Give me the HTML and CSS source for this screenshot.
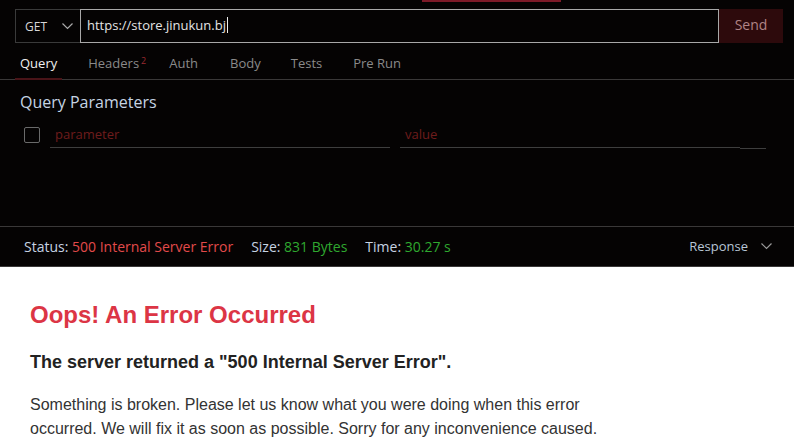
FILE: index.html
```html
<!DOCTYPE html>
<html>
<head>
<meta charset="utf-8">
<link rel="stylesheet" href="styles.css">
</head>
<body>
<div class="app">
  <div class="topline"><span class="redmark"></span></div>
  <div class="urlbar">
    <div class="method">
      <span>GET</span>
      <svg class="chev" width="11" height="7" viewBox="0 0 11 7"><path d="M0.5 0.5 L5.5 5.5 L10.5 0.5" fill="none" stroke="#aaa" stroke-width="1.2"/></svg>
    </div>
    <div class="url"><span class="urltext">https://store.jinukun.bj</span><span class="caret"></span></div>
    <div class="send">Send</div>
  </div>
  <div class="tabs">
    <div class="tab active">Query</div>
    <div class="tab">Headers<sup class="badge">2</sup></div>
    <div class="tab">Auth</div>
    <div class="tab">Body</div>
    <div class="tab">Tests</div>
    <div class="tab">Pre Run</div>
  </div>
  <div class="params">
    <div class="ptitle">Query Parameters</div>
    <div class="prow">
      <div class="check"></div>
      <div class="field fparam">parameter</div>
      <div class="field fvalue">value</div>
      <div class="ftail"></div>
    </div>
  </div>
  <div class="status">
    <div class="stat">Status: <span class="err">500 Internal Server Error</span></div>
    <div class="stat">Size: <span class="ok">831 Bytes</span></div>
    <div class="stat">Time: <span class="ok">30.27 s</span></div>
    <div class="spacer"></div>
    <div class="resp">Response
      <svg class="chev2" width="11" height="7" viewBox="0 0 11 7"><path d="M0.5 0.5 L5.5 5.5 L10.5 0.5" fill="none" stroke="#999" stroke-width="1.2"/></svg>
    </div>
  </div>
  <div class="preview">
    <h1>Oops! An Error Occurred</h1>
    <h2>The server returned a "500 Internal Server Error".</h2>
    <p>Something is broken. Please let us know what you were doing when this error occurred. We will fix it as soon as possible. Sorry for any inconvenience caused.</p>
  </div>
</div>
</body>
</html>
```

FILE: styles.css
```css
* { box-sizing: border-box; }
html, body { margin: 0; padding: 0; }
body {
  width: 794px;
  height: 441px;
  overflow: hidden;
  background: #050303;
  font-family: "Open Sans", "Noto Sans", sans-serif;
}
.app { display: flex; flex-direction: column; height: 441px; }
.topline { height: 9px; position: relative; }
.redmark {
  position: absolute; left: 422px; top: 0; width: 139px; height: 2px;
  background: #7d1a28;
}
.urlbar {
  display: flex;
  height: 34px;
  margin: 0 11px 0 15px;
}
.method {
  width: 65px;
  border: 1px solid #3a3a3a;
  border-right: none;
  display: flex; align-items: center;
  padding-left: 9px;
  color: #d8d8d8;
  font-size: 12px;
}
.method span { flex: 1; }
.method .chev { margin-right: 7px; }
.url {
  flex: 1;
  border: 1px solid #a8a8a8;
  display: flex; align-items: center;
  padding-left: 6px;
  padding-bottom: 2px;
  color: #e4e4e4;
  font-size: 13px;
}
.caret { width: 1px; height: 16px; background: #eee; margin-left: 1px; }
.send {
  width: 64px;
  background: #2d0a0c;
  color: #b08486;
  font-size: 14px;
  padding-bottom: 3px;
  display: flex; align-items: center; justify-content: center;
}
.tabs {
  display: flex;
  height: 37px;
  border-bottom: 1px solid #3a3838;
  padding-left: 15px;
}
.tab {
  color: #8a8a8a;
  font-size: 13px;
  display: flex; align-items: center;
  padding: 4px 5px 0 5px;
  position: relative;
}
.tab:nth-child(1) { margin-right: 21px; }
.tab:nth-child(2) { margin-right: 13px; }
.tab:nth-child(3) { margin-right: 22px; }
.tab:nth-child(4) { margin-right: 20px; }
.tab:nth-child(5) { margin-right: 21px; }
.tab.active { color: #f0f0f0; }
.tab.active::after {
  content: ""; position: absolute; left: 0; right: 0; bottom: -1px; height: 2px;
  background: #4a1418;
}
.badge { color: #9a2a30; font-size: 9px; margin-left: 2px; position: relative; top: -3px; }
.params { height: 147px; border-bottom: 1px solid #3a3838; padding: 12px 0 0 20px; }
.ptitle { color: #c6d4e4; font-size: 16px; line-height: 20px; }
.prow { display: flex; align-items: flex-end; margin-top: 10px; }
.check {
  width: 16px; height: 16px; border: 1px solid #6a6a6a; border-radius: 2px;
  margin-left: 4px; margin-right: 10px; margin-bottom: 5px;
}
.field {
  width: 340px; height: 26px;
  border-bottom: 1px solid #3e3e3e;
  color: #6e1c1c;
  font-size: 13px;
  padding-left: 5px;
  padding-bottom: 2px;
  display: flex; align-items: center;
}
.fvalue { margin-left: 10px; }
.ftail { width: 26px; border-bottom: 1px solid #3e3e3e; margin-bottom: -1px; }
.status {
  height: 40px;
  border-bottom: 1px solid #3a3838;
  display: flex; align-items: center;
  padding-left: 24px;
  padding-bottom: 1px;
  font-size: 14px;
  color: #c6d2e2;
}
.stat { margin-right: 18px; white-space: nowrap; }
.err { color: #e24a4a; }
.ok { color: #2fa82f; }
.spacer { flex: 1; }
.resp { color: #b8c6d6; font-size: 13px; margin-right: 22px; display: flex; align-items: center; }
.chev2 { margin-left: 13px; }
.preview {
  flex: 1;
  background: #ffffff;
  padding: 0 30px;
  font-family: "Liberation Sans", Arial, sans-serif;
}
.preview h1 {
  margin: 34px 0 0 0;
  font-size: 24px;
  line-height: 28px;
  color: #dc3545;
  font-weight: bold;
}
.preview h2 {
  margin: 22px 0 0 0;
  font-size: 18px;
  line-height: 22px;
  color: #222;
}
.preview p {
  margin: 20px 0 0 0;
  font-size: 16px;
  line-height: 24px;
  color: #333;
  max-width: 575px;
}
```
